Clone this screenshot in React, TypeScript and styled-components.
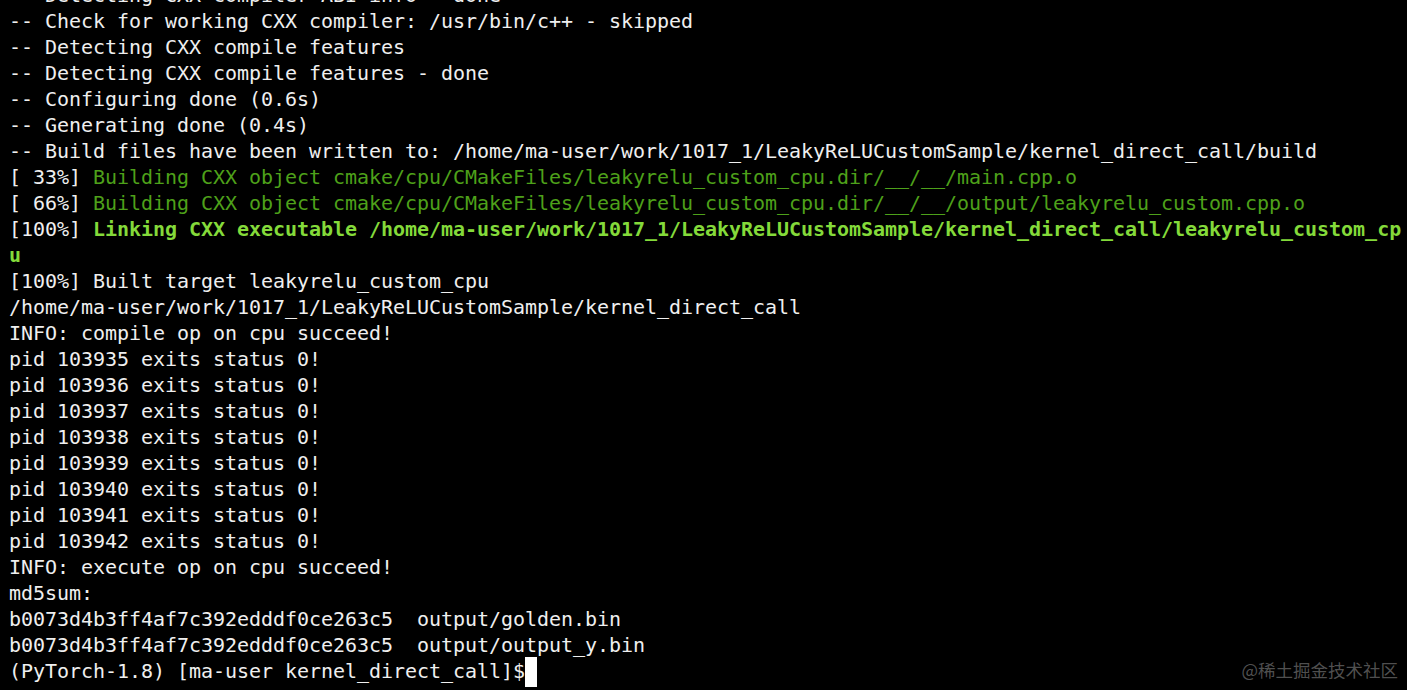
import React from "react";
import styled, { createGlobalStyle } from "styled-components";

const GlobalStyle = createGlobalStyle`
  html, body {
    margin: 0;
    padding: 0;
    background: #000;
  }
  #root {
    width: 1407px;
    height: 690px;
  }
`;

const Screen = styled.div`
  position: relative;
  width: 1407px;
  height: 690px;
  background: #000;
  overflow: hidden;
`;

const Output = styled.div`
  display: flex;
  flex-direction: column;
  margin-top: -18px;
  padding-left: 9px;
  font-family: "DejaVu Sans Mono", "Liberation Mono", monospace;
  font-size: 20px;
  letter-spacing: -0.04px;
  line-height: 26px;
  color: #efefef;
  white-space: pre;
`;

const Line = styled.div`
  height: 26px;
`;

type Tone = "plain" | "dim" | "bold";

const Seg = styled.span<{ $tone: Tone }>`
  color: ${(p) =>
    p.$tone === "dim" ? "#4ea11a" : p.$tone === "bold" ? "#84da3a" : "#efefef"};
  font-weight: ${(p) => (p.$tone === "bold" ? 700 : 400)};
`;

const Cursor = styled.span`
  display: inline-block;
  width: 12px;
  height: 30px;
  margin-top: -1px;
  background: #ffffff;
  vertical-align: top;
`;

const Watermark = styled.div`
  position: absolute;
  right: 9px;
  bottom: 8px;
  font-family: "Noto Sans CJK SC", "Noto Sans", sans-serif;
  font-size: 17.5px;
  line-height: 24px;
  color: rgba(150, 150, 150, 0.55);
  letter-spacing: 0;
`;

type Segment = [Tone, string];

const p = (s: string): Segment[] => [["plain", s]];

const lines: Segment[][] = [
  p("-- Detecting CXX compiler ABI info - done"),
  p("-- Check for working CXX compiler: /usr/bin/c++ - skipped"),
  p("-- Detecting CXX compile features"),
  p("-- Detecting CXX compile features - done"),
  p("-- Configuring done (0.6s)"),
  p("-- Generating done (0.4s)"),
  p(
    "-- Build files have been written to: /home/ma-user/work/1017_1/LeakyReLUCustomSample/kernel_direct_call/build"
  ),
  [
    ["plain", "[ 33%] "],
    ["dim", "Building CXX object cmake/cpu/CMakeFiles/leakyrelu_custom_cpu.dir/__/__/main.cpp.o"],
  ],
  [
    ["plain", "[ 66%] "],
    [
      "dim",
      "Building CXX object cmake/cpu/CMakeFiles/leakyrelu_custom_cpu.dir/__/__/output/leakyrelu_custom.cpp.o",
    ],
  ],
  [
    ["plain", "[100%] "],
    [
      "bold",
      "Linking CXX executable /home/ma-user/work/1017_1/LeakyReLUCustomSample/kernel_direct_call/leakyrelu_custom_cp",
    ],
  ],
  [["bold", "u"]],
  p("[100%] Built target leakyrelu_custom_cpu"),
  p("/home/ma-user/work/1017_1/LeakyReLUCustomSample/kernel_direct_call"),
  p("INFO: compile op on cpu succeed!"),
  ...[103935, 103936, 103937, 103938, 103939, 103940, 103941, 103942].map((n) =>
    p(`pid ${n} exits status 0!`)
  ),
  p("INFO: execute op on cpu succeed!"),
  p("md5sum:"),
  p("b0073d4b3ff4af7c392edddf0ce263c5  output/golden.bin"),
  p("b0073d4b3ff4af7c392edddf0ce263c5  output/output_y.bin"),
];

export default function App() {
  return (
    <>
      <GlobalStyle />
      <Screen>
        <Output>
          {lines.map((segs, i) => (
            <Line key={i}>
              {segs.map(([tone, text], j) => (
                <Seg key={j} $tone={tone}>
                  {text}
                </Seg>
              ))}
            </Line>
          ))}
          <Line>
            <Seg $tone="plain">(PyTorch-1.8) [ma-user kernel_direct_call]$</Seg>
            <Cursor />
          </Line>
        </Output>
        <Watermark>@稀土掘金技术社区</Watermark>
      </Screen>
    </>
  );
}
